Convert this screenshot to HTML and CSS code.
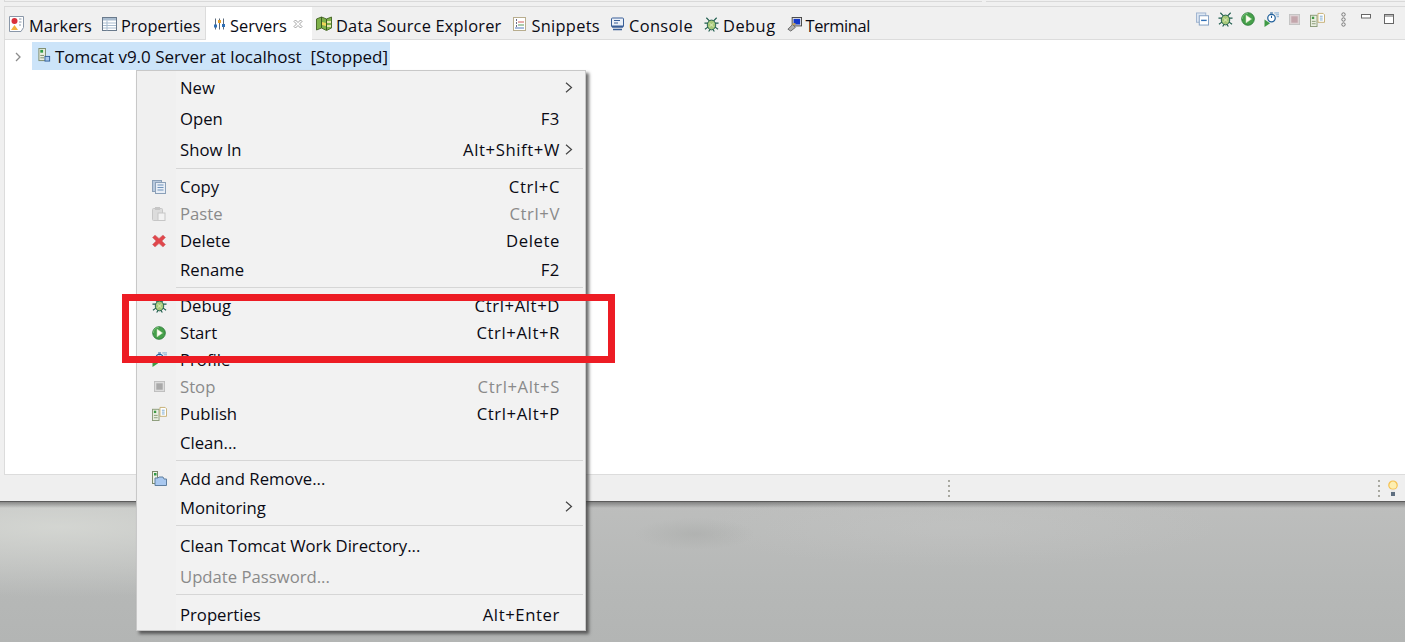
FILE: index.html
```html
<!DOCTYPE html>
<html lang="en">
<head>
<meta charset="utf-8">
<title>Servers</title>
<link rel="stylesheet" href="styles.css">
</head>
<body>
<svg class="defs" width="0" height="0" aria-hidden="true">
  <symbol id="i-chev" viewBox="0 0 8 11">
    <path d="M1 .8l5.500 4.700L1 10.200" fill="none" stroke="#444" stroke-width="1.200"/>
  </symbol>
  <symbol id="i-debug" viewBox="0 0 16 16">
    <g stroke="#1d5c4c" stroke-width="1.200" fill="none"><path d="M2.500 .8l3.500 3.700M13.500 .8L10 4.500M.5 6.500h3.500M15.500 6.500H12M1 13l3.500-2.500M15 13l-3.500-2.500M5 15.500l1.500-2.500M11 15.500L9.500 13"/></g>
    <ellipse cx="8" cy="8.500" rx="4.500" ry="5.200" fill="#a6c878" stroke="#1d5c4c"/>
    <path d="M5.800 6.500l4.400 4M5.800 10.500l4.400-4" stroke="#e2efc2"/>
  </symbol>
  <symbol id="i-start" viewBox="0 0 16 16">
    <circle cx="8" cy="8" r="7.200" fill="#46a04a" stroke="#2a7a38"/>
    <path d="M1.500 8a6.500 6.500 0 0 1 6.500-6.500" fill="none" stroke="#7cc07a"/>
    <path d="M5.800 3.600l6.200 4.400-6.200 4.400z" fill="#fdfdf4" stroke="#d8ecc8" stroke-width=".6"/>
  </symbol>
  <symbol id="i-profile" viewBox="0 0 16 16">
    <circle cx="8" cy="6.500" r="4" fill="#fff" stroke="#1f5f9a" stroke-width="1.300"/>
    <path d="M8 6.500V4M6.500 1h3" stroke="#1f5f9a" stroke-width="1.100"/>
    <path d="M11 1h5M12.500 3h3.500M13.500 5h2.500" stroke="#7aa7cf"/>
    <path d="M0.500 8l6 4-6 4z" fill="#3f9a45"/>
  </symbol>
  <symbol id="i-stop" viewBox="0 0 12 12">
    <rect x=".5" y=".5" width="11" height="11" fill="#dcdcdc" stroke="#bdbdbd"/>
    <rect x="2.500" y="2.500" width="7" height="7" fill="#a9a9a9"/>
  </symbol>
  <symbol id="i-publish" viewBox="0 0 16 16">
    <rect x=".5" y="3.500" width="7" height="12" fill="#e9eee0" stroke="#8a9a78"/>
    <rect x="2" y="5" width="2.500" height="2.500" fill="#3f9a45"/>
    <path d="M2 10h4M2 12.500h4" stroke="#8a9a78"/>
    <path d="M8.500 1.500h5.500l1.500 1.500v8h-7z" fill="#fff" stroke="#c4ae72"/>
    <path d="M10.500 4.500h3M10.500 6.500h3M10.500 8.500h3" stroke="#7aa7cf"/>
  </symbol>
</svg>

<div class="topstrip">
  <div class="strip strip-a"></div>
  <div class="strip strip-b"></div>
</div>

<nav class="tabbar">
  <div class="tab tab-mark">
    <svg class="ic w15" viewBox="0 0 15 16"><path d="M.5.500h14v11l-2.500 4H.5z" fill="#fff" stroke="#8a97a8"/><circle cx="5.500" cy="5" r="3" fill="#d9303a"/><path d="M2 14l3.500-5 3.500 5z" fill="#f2b13c"/><path d="M10 3h2.500M10 6h2.500M10 9h2" stroke="#8a97a8"/></svg>
    <span>Markers</span>
  </div>
  <div class="tab tab-prop">
    <svg class="ic w15" viewBox="0 0 15 15"><rect x=".5" y=".5" width="14" height="13" fill="#fff" stroke="#6a7a8c"/><rect x="1" y="1" width="13" height="2.500" fill="#a9bccf"/><path d="M1 6h13M1 8.500h13M1 11h13M5 3.500v10" stroke="#a9bccf"/></svg>
    <span>Properties</span>
  </div>
  <div class="tab tab-active">
    <svg class="ic w13" viewBox="0 0 13 13"><path d="M2.500 1v11M6.500 1v11M10.500 1v11" stroke="#5a6a7c"/><rect x="1" y="7" width="3" height="3" fill="#2f6fb5"/><rect x="5" y="2.500" width="3" height="3" fill="#e8a22c"/><rect x="9" y="6.500" width="3" height="3" fill="#2f6fb5"/></svg>
    <span>Servers</span>
    <svg class="close" viewBox="0 0 10 10"><path d="M1 2.500L2.500 1 5 3.500 7.500 1 9 2.500 6.500 5 9 7.500 7.500 9 5 6.500 2.500 9 1 7.500 3.500 5z" fill="#fff" stroke="#8c8c8c" stroke-width=".8"/></svg>
  </div>
  <div class="tab tab-ds">
    <svg class="ic w16" viewBox="0 0 16 16"><path d="M.5 3l5-2 5 2 5-2v11l-5 2.500-5-2.500-5 2z" fill="#7fb24a" stroke="#4d6d2e"/><path d="M5.500 1v11M10.500 3v11" stroke="#3c5a24"/><path d="M6 6l4 1v3l-4-1z" fill="#f2d65a"/><path d="M11 5h4v2h-4zM11 9h4v2h-4z" fill="#e9e5b0"/></svg>
    <span>Data Source Explorer</span>
  </div>
  <div class="tab tab-snip">
    <svg class="ic w13" viewBox="0 0 13 14"><rect x=".5" y=".5" width="12" height="13" fill="#fff" stroke="#b8ad8e"/><path d="M3 3h1M3 6h1M3 9h1" stroke="#3a3a60" stroke-width="1.400"/><path d="M5 5h6" stroke="#d05a5a"/><path d="M5 8h6" stroke="#5a9a5a"/><rect x="2" y="10" width="9" height="2" fill="#a9bcdf"/></svg>
    <span>Snippets</span>
  </div>
  <div class="tab tab-con">
    <svg class="ic w13" viewBox="0 0 13 13"><rect x=".5" y=".5" width="12" height="9" rx="1" fill="#eaf0f8" stroke="#3a5f98"/><rect x="1" y="8" width="11" height="2" fill="#3a5f98"/><path d="M3 3h6M3 5.500h4" stroke="#3a5f98"/><path d="M2 12h9" stroke="#3a5f98" stroke-width="1.500"/></svg>
    <span>Console</span>
  </div>
  <div class="tab tab-dbg">
    <svg class="ic w15"><use href="#i-debug"/></svg>
    <span>Debug</span>
  </div>
  <div class="tab tab-term">
    <svg class="ic w15" viewBox="0 0 16 16"><rect x="5.500" y=".5" width="10" height="9" fill="#e8e8e8" stroke="#444"/><rect x="7" y="2" width="7" height="6" fill="#1438c8"/><path d="M1 13l5-5 3 3-5 4z" fill="#b0b0b0" stroke="#666"/><path d="M6 8l3-1" stroke="#d8a83a" stroke-width="1.500"/></svg>
    <span>Terminal</span>
  </div>

  <div class="viewtools">
    <svg class="t t13" viewBox="0 0 14 14"><rect x=".5" y=".5" width="10" height="10" fill="#dde6f2" stroke="#9db2cf"/><rect x="3.500" y="3.500" width="10" height="10" fill="#fff" stroke="#7f9cc0"/><path d="M5.500 8.500h6" stroke="#2f6fb5" stroke-width="1.500"/></svg>
    <svg class="t t15"><use href="#i-debug"/></svg>
    <svg class="t t14"><use href="#i-start"/></svg>
    <svg class="t t15 t-prof"><use href="#i-profile"/></svg>
    <svg class="t t11" viewBox="0 0 12 12"><rect x=".5" y=".5" width="11" height="11" fill="#dcd2d4" stroke="#c2c2c2"/><rect x="2.500" y="2.500" width="7" height="7" fill="#c4a6ac"/></svg>
    <svg class="t t15 t-pub"><use href="#i-publish"/></svg>
    <svg class="t dots" viewBox="0 0 5 15"><g fill="none" stroke="#777"><circle cx="2.500" cy="2.500" r="1.700"/><circle cx="2.500" cy="7.500" r="1.700"/><circle cx="2.500" cy="12.500" r="1.700"/></g></svg>
    <svg class="t mini" viewBox="0 0 10 5"><rect x=".5" y=".5" width="9" height="3.500" fill="#fff" stroke="#666"/></svg>
    <svg class="t maxi" viewBox="0 0 10 10"><rect x=".5" y=".5" width="9" height="9" fill="#fff" stroke="#666"/><path d="M1 2h8" stroke="#666"/></svg>
  </div>
</nav>

<main class="pane">
  <div class="tree-row">
    <svg class="twisty" viewBox="0 0 8 10"><path d="M2 1l4 4-4 4" fill="none" stroke="#8c8c8c" stroke-width="1.300"/></svg>
    <div class="tree-sel">
      <svg class="ic w13" viewBox="0 0 13 15"><rect x=".5" y=".5" width="7" height="13" fill="#e9eee0" stroke="#7b8a6a"/><rect x="2" y="2" width="3" height="3" fill="#2f9a45"/><path d="M2 8h4M2 10.500h4" stroke="#7b8a6a"/><rect x="7" y="9" width="5" height="5" fill="#a9c8ef" stroke="#2f5f9a"/></svg>
      <span class="tree-text">Tomcat v9.0 Server at localhost</span>
      <span class="tree-state">[Stopped]</span>
    </div>
  </div>
</main>

<footer class="status">
  <div class="status-grip"></div>
  <div class="status-grip status-grip-r"></div>
  <svg class="bulb" viewBox="0 0 10 16"><circle cx="5" cy="5.200" r="4.200" fill="#fdeeb0" stroke="#f5c050" stroke-width="1.200"/><rect x="3" y="9.500" width="4" height="2.500" fill="#e8e8e8"/><rect x="3" y="12" width="4" height="4" fill="#5f6f80"/></svg>
</footer>

<div class="wallpaper"></div>

<div class="menu">
  <div class="item lead"><span class="gut"></span><span class="label">New</span><svg class="arrow"><use href="#i-chev"/></svg></div>
  <div class="item lead"><span class="gut"></span><span class="label">Open</span><span class="key">F3</span></div>
  <div class="item lead"><span class="gut"></span><span class="label">Show In</span><span class="key">Alt+Shift+W</span><svg class="arrow"><use href="#i-chev"/></svg></div>
  <div class="sep"></div>
  <div class="item short"><span class="gut"><svg class="m14" viewBox="0 0 14 14"><rect x=".5" y=".5" width="9" height="11" fill="#b8c9dd" stroke="#8ba0b8"/><rect x="3.500" y="2.500" width="10" height="11" fill="#e8eef6" stroke="#8ba0b8"/><path d="M5.500 5h6M5.500 7.500h6M5.500 10h6" stroke="#6f93bb"/></svg></span><span class="label">Copy</span><span class="key">Ctrl+C</span></div>
  <div class="item short off"><span class="gut"><svg class="m14" viewBox="0 0 14 14"><rect x=".5" y="1.500" width="10" height="12" rx="1" fill="#dcdcdc" stroke="#c6c6c6"/><rect x="3" y="0" width="5" height="3" fill="#c6c6c6"/><rect x="6" y="6" width="7" height="7.500" fill="#f2f2f2" stroke="#c6c6c6"/></svg></span><span class="label">Paste</span><span class="key">Ctrl+V</span></div>
  <div class="item short"><span class="gut"><svg class="m14" viewBox="0 0 14 14"><path d="M3 1l4 3.500L11 1l2.500 2.500L10 7l3.500 3.500L11 13 7 9.500 3 13 .5 10.500 4 7 .5 3.500z" fill="#e0474c" stroke="#cf7c7f" stroke-width=".6"/></svg></span><span class="label">Delete</span><span class="key">Delete</span></div>
  <div class="item"><span class="gut"></span><span class="label">Rename</span><span class="key">F2</span></div>
  <div class="sep"></div>
  <div class="item short"><span class="gut"><svg class="m15"><use href="#i-debug"/></svg></span><span class="label">Debug</span><span class="key">Ctrl+Alt+D</span></div>
  <div class="item short"><span class="gut"><svg class="m14"><use href="#i-start"/></svg></span><span class="label">Start</span><span class="key">Ctrl+Alt+R</span></div>
  <div class="item short"><span class="gut"><svg class="m15"><use href="#i-profile"/></svg></span><span class="label">Profile</span></div>
  <div class="item short off"><span class="gut"><svg class="m11"><use href="#i-stop"/></svg></span><span class="label">Stop</span><span class="key">Ctrl+Alt+S</span></div>
  <div class="item short"><span class="gut"><svg class="m15"><use href="#i-publish"/></svg></span><span class="label">Publish</span><span class="key">Ctrl+Alt+P</span></div>
  <div class="item"><span class="gut"></span><span class="label">Clean...</span></div>
  <div class="sep"></div>
  <div class="item short"><span class="gut"><svg class="m15" viewBox="0 0 15 15"><rect x=".5" y=".5" width="5" height="12" fill="#eef2e6" stroke="#7b8a6a"/><rect x="2" y="2" width="2.500" height="2.500" fill="#2f9a45"/><path d="M3 7h3l1-1h4l1 2h2.500v6.500H3z" fill="#a9c8ef" stroke="#5f7f9f"/></svg></span><span class="label">Add and Remove...</span></div>
  <div class="item"><span class="gut"></span><span class="label">Monitoring</span><svg class="arrow"><use href="#i-chev"/></svg></div>
  <div class="sep"></div>
  <div class="item"><span class="gut"></span><span class="label">Clean Tomcat Work Directory...</span></div>
  <div class="item off"><span class="gut"></span><span class="label">Update Password...</span></div>
  <div class="sep"></div>
  <div class="item"><span class="gut"></span><span class="label">Properties</span><span class="key">Alt+Enter</span></div>
</div>

<div class="callout"></div>
</body>
</html>
```
FILE: styles.css
```css
* { box-sizing: border-box; }
html, body { margin: 0; height: 100%; }
body {
  width: 1405px;
  height: 642px;
  overflow: hidden;
  display: flex;
  flex-direction: column;
  position: relative;
  background: #f0f0f0;
  font-family: "Open Sans", "Noto Sans", sans-serif;
  font-size: 17px;
  color: #0a0a14;
}
.defs { position: absolute; }
svg { display: block; flex: none; }

.topstrip { height: 6px; flex: none; display: flex; gap: 4px; padding-left: 4px; }
.strip { height: 2px; border-bottom: 1px solid #d9d9d9; }
.strip-a { width: 978px; border-left: 1px solid #d9d9d9; }
.strip-b { flex: 1; }

.tabbar {
  height: 33px; flex: none;
  display: flex; align-items: stretch;
  margin-left: 4px;
  background: #f0f0f0;
  border-top: 1px solid #d9d9d9;
  border-left: 1px solid #dcdcdc;
  padding-left: 4px;
  font-size: 16.4px;
}
.tab { display: flex; align-items: center; gap: 4px; white-space: nowrap; padding-top: 2px; }
.tab span { padding-top: 3px; }
.tab-mark { gap: 5px; width: 83px; }
.tab-prop { margin-left: 10px; width: 99px; }
.tab-active {
  position: relative;
  margin: 0 0 -1px 4px; width: 107px; padding: 2px 0 1px 7px; background: #fff;
  border-left: 1px solid #dcdcdc;
}
.tab-ds { margin-left: 4px; letter-spacing: .2px; }
.tab-snip { margin-left: 12px; gap: 5px; letter-spacing: .3px; }
.tab-con { margin-left: 11px; gap: 5px; letter-spacing: .4px; }
.tab-dbg { margin-left: 11px; letter-spacing: .5px; }
.tab-term { margin-left: 11px; letter-spacing: -.4px; }
.w13 { width: 13px; height: 14px; }
.w15 { width: 15px; height: 15px; }
.tab-mark .w15 { height: 16px; }
.w16 { width: 16px; height: 16px; }
.close { width: 10px; height: 10px; margin-left: 2px; }

.viewtools { margin-left: auto; display: flex; align-items: center; padding: 0 11px 8px 0; }
.t { margin-left: 9px; }
.t13 { width: 13px; height: 14px; }
.t15 { width: 15px; height: 15px; }
.t14 { width: 14px; height: 14px; margin-left: 8px; }
.t11 { width: 11px; height: 11px; margin-left: 10px; }
.t-pub { margin-left: 10px; }
.dots { width: 5px; height: 15px; margin-left: 16px; }
.mini { width: 10px; height: 5px; margin-left: 15px; margin-bottom: 6px; }
.maxi { width: 10px; height: 10px; margin-left: 13px; }

.pane {
  height: 436px; flex: none;
  margin-left: 4px;
  background: #fff;
  border-top: 1px solid #dcdcdc;
  border-left: 1px solid #dcdcdc;
  border-bottom: 1px solid #dcdcdc;
  padding: 2px 0 0 9px;
}
.tree-row { display: flex; align-items: center; height: 28px; }
.twisty { width: 8px; height: 10px; margin: 2px 10px 0 0; }
.tree-sel {
  display: flex; align-items: center;
  height: 28px; width: 358px; padding-left: 6px;
  background: #cce4f9;
  white-space: nowrap;
}
.tree-sel .ic { margin-bottom: 2px; }
.tree-text { margin-left: 4px; }
.tree-state { margin-left: 9px; }

.status {
  height: 26px; flex: none;
  background: #efefef;
  display: flex; align-items: center; justify-content: flex-end;
  padding-right: 7px;
}
.status-grip { width: 2px; height: 17px; margin-right: 428px;
  background: repeating-linear-gradient(to bottom, #a8a8a0 0 2px, transparent 2px 5px); }
.status-grip-r { margin-right: 8px; }
.bulb { width: 10px; height: 16px; }

.wallpaper {
  flex: 1;
  border-top: 1px solid #5c5c5c;
  background:
    radial-gradient(ellipse 60px 16px at 695px 32px, rgba(165,167,165,.45), transparent),
    radial-gradient(ellipse 260px 40px at 960px 25px, rgba(200,201,200,.35), transparent),
    linear-gradient(to bottom, rgba(90,90,90,.6) 0, transparent 6px),
    radial-gradient(ellipse 420px 70px at 60px 25px, rgba(214,216,212,.9), transparent),
    linear-gradient(to bottom, #bdbebd 0, #b6b8b7 60%, #b3b5b4 100%);
}

.menu {
  position: absolute; left: 136px; top: 70px;
  width: 450px; height: 561px;
  padding: 2px 2px 0 1px;
  font-size: 16.7px;
  background: linear-gradient(to right, #f0f0f0 39px, #f2f2f2 39px);
  border: 1px solid #c8c8c8;
  box-shadow: 3px 3px 3px rgba(60,60,60,.75);
}
.item { display: flex; align-items: center; height: 31px; padding-right: 23px; position: relative; white-space: nowrap; }
.short { height: 27px; }
.gut { width: 42px; height: 100%; display: flex; align-items: center; padding-left: 14px; flex: none; }
.label { flex: 1; }
.key { letter-spacing: .6px; }
.lead .label, .lead .key { margin-top: -2px; }
.off { color: #8a8a8a; }
.arrow { position: absolute; right: 10px; top: 9px; width: 8px; height: 11px; }
.sep { height: 7px; margin-left: 38px; padding-top: 2px; }
.sep::before { content: ""; display: block; height: 1px; background: #d6d6d6; }
.m14 { width: 14px; height: 14px; }
.m15 { width: 15px; height: 15px; }
.m11 { width: 11px; height: 11px; margin-left: 2px; }

.callout {
  position: absolute; left: 122px; top: 294px;
  width: 493px; height: 69px;
  border: 7px solid #ed1c24;
}
```
